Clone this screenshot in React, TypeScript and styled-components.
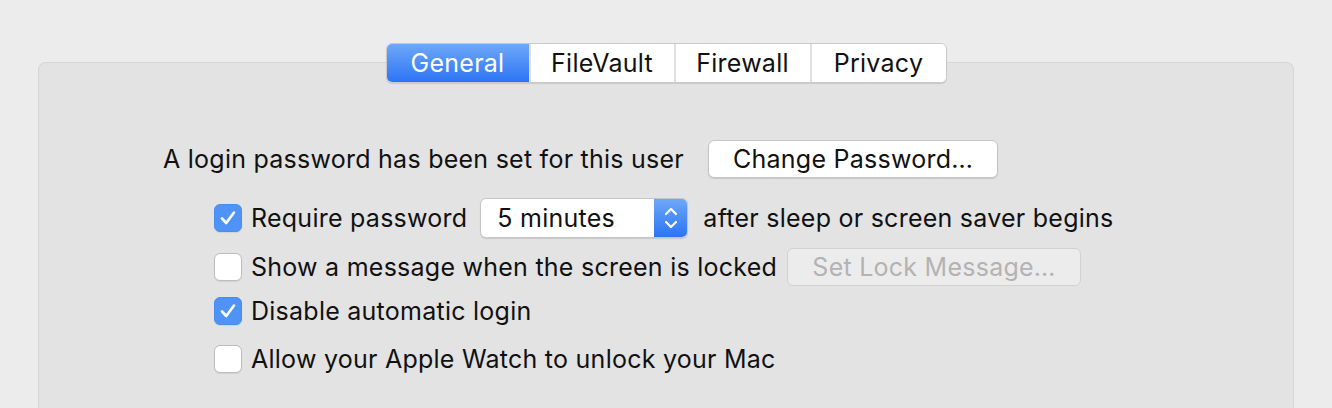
import styled, { createGlobalStyle } from 'styled-components'

const GlobalStyle = createGlobalStyle`
  html, body {
    margin: 0;
    padding: 0;
    background: #ececec;
    overflow: hidden;
  }
  body {
    font-family: Inter, "Liberation Sans", Arial, sans-serif;
    -webkit-font-smoothing: antialiased;
  }
`

const Window = styled.div`
  width: 1332px;
  height: 408px;
  padding-top: 43px;
  box-sizing: border-box;
  display: flex;
  flex-direction: column;
  align-items: center;
`

const TabBar = styled.div`
  position: relative;
  z-index: 1;
  display: flex;
  height: 40px;
  box-sizing: border-box;
  border: 1px solid #c9c9c9;
  border-radius: 6px;
  background: #fff;
  box-shadow: 0 1px 1px rgba(0, 0, 0, 0.12);
  margin-bottom: -21px;
  overflow: hidden;
`

const Tab = styled.div<{ $w: number; $active?: boolean }>`
  width: ${({ $w }) => $w}px;
  box-sizing: border-box;
  display: flex;
  align-items: center;
  justify-content: center;
  font-size: 25px;
  letter-spacing: 0.25px;
  color: ${({ $active }) => ($active ? '#fff' : '#111')};
  background: ${({ $active }) =>
    $active ? 'linear-gradient(180deg, #6ea8f9 0%, #2c74f4 100%)' : '#fff'};
  & + & {
    border-left: 2px solid #e0e0e0;
  }
`

const Panel = styled.div`
  align-self: stretch;
  flex: 1;
  margin: 0 38px;
  background: #e3e3e3;
  border: 1px solid #d6d6d6;
  border-bottom: none;
  border-radius: 8px 8px 0 0;
  padding: 77px 0 0 124px;
  display: flex;
  flex-direction: column;
`

const Row = styled.div<{ $top: number; $h: number; $indent?: boolean }>`
  display: flex;
  align-items: center;
  height: ${({ $h }) => $h}px;
  margin-top: ${({ $top }) => $top}px;
  padding-left: ${({ $indent }) => ($indent ? 51 : 0)}px;
`

const Label = styled.span<{ $gap?: number }>`
  font-size: 25px;
  letter-spacing: 0.25px;
  color: #111;
  white-space: nowrap;
  margin-right: ${({ $gap }) => $gap ?? 0}px;
`

const PushButton = styled.div<{ $w: number; $disabled?: boolean }>`
  width: ${({ $w }) => $w}px;
  height: 38px;
  box-sizing: border-box;
  display: flex;
  align-items: center;
  justify-content: center;
  font-size: 25px;
  letter-spacing: 0.25px;
  border-radius: 6px;
  color: ${({ $disabled }) => ($disabled ? '#b3b3b3' : '#111')};
  background: ${({ $disabled }) => ($disabled ? '#ececec' : '#fff')};
  border: 1px solid ${({ $disabled }) => ($disabled ? '#d2d2d2' : '#c4c4c4')};
  box-shadow: ${({ $disabled }) => ($disabled ? 'none' : '0 1px 1px rgba(0,0,0,0.12)')};
`

const Box = styled.div<{ $checked?: boolean }>`
  width: 28px;
  height: 28px;
  box-sizing: border-box;
  border-radius: 6px;
  margin-right: 9px;
  display: flex;
  align-items: center;
  justify-content: center;
  background: ${({ $checked }) => ($checked ? '#4f93f6' : '#fff')};
  border: 1px solid ${({ $checked }) => ($checked ? '#4a8cf0' : '#bdbdbd')};
  box-shadow: 0 1px 1px rgba(0, 0, 0, 0.08);
`

const Popup = styled.div`
  width: 208px;
  height: 40px;
  box-sizing: border-box;
  display: flex;
  border-radius: 6px;
  border: 1px solid #c6c6c6;
  background: #fff;
  box-shadow: 0 1px 1px rgba(0, 0, 0, 0.12);
  overflow: hidden;
  margin: 0 15px 0 13px;
`

const PopupValue = styled.div`
  flex: 1;
  display: flex;
  align-items: center;
  padding-left: 16px;
  font-size: 25px;
  letter-spacing: 0.25px;
  color: #111;
`

const PopupArrows = styled.div`
  width: 33px;
  display: flex;
  align-items: center;
  justify-content: center;
  background: linear-gradient(180deg, #6ea8f9 0%, #2c74f4 100%);
`

const Check = () => (
  <svg width="18" height="16" viewBox="0 0 18 16">
    <polyline
      points="3,8.5 7.2,13 15,2.5"
      fill="none"
      stroke="#fff"
      strokeWidth="2.6"
      strokeLinecap="round"
      strokeLinejoin="round"
    />
  </svg>
)

const Checkbox = ({ checked }: { checked?: boolean }) => (
  <Box $checked={checked}>{checked && <Check />}</Box>
)

const Chevrons = () => (
  <svg width="16" height="28" viewBox="0 0 16 28">
    <polyline points="3,10 8,5 13,10" fill="none" stroke="#fff" strokeWidth="2.2" strokeLinecap="round" strokeLinejoin="round" />
    <polyline points="3,18 8,23 13,18" fill="none" stroke="#fff" strokeWidth="2.2" strokeLinecap="round" strokeLinejoin="round" />
  </svg>
)

const tabs = [
  { label: 'General', w: 142, active: true },
  { label: 'FileVault', w: 145 },
  { label: 'Firewall', w: 136 },
  { label: 'Privacy', w: 136 },
]

export default function App() {
  return (
    <Window>
      <GlobalStyle />
      <TabBar>
        {tabs.map((t) => (
          <Tab key={t.label} $w={t.w} $active={t.active}>
            {t.label}
          </Tab>
        ))}
      </TabBar>
      <Panel>
        <Row $top={0} $h={38}>
          <Label $gap={24}>A login password has been set for this user</Label>
          <PushButton $w={290}>Change Password…</PushButton>
        </Row>
        <Row $top={20} $h={40} $indent>
          <Checkbox checked />
          <Label>Require password</Label>
          <Popup>
            <PopupValue>5 minutes</PopupValue>
            <PopupArrows>
              <Chevrons />
            </PopupArrows>
          </Popup>
          <Label>after sleep or screen saver begins</Label>
        </Row>
        <Row $top={10} $h={38} $indent>
          <Checkbox />
          <Label $gap={10}>Show a message when the screen is locked</Label>
          <PushButton $w={294} $disabled>
            Set Lock Message…
          </PushButton>
        </Row>
        <Row $top={11} $h={28} $indent>
          <Checkbox checked />
          <Label>Disable automatic login</Label>
        </Row>
        <Row $top={20} $h={28} $indent>
          <Checkbox />
          <Label>Allow your Apple Watch to unlock your Mac</Label>
        </Row>
      </Panel>
    </Window>
  )
}
